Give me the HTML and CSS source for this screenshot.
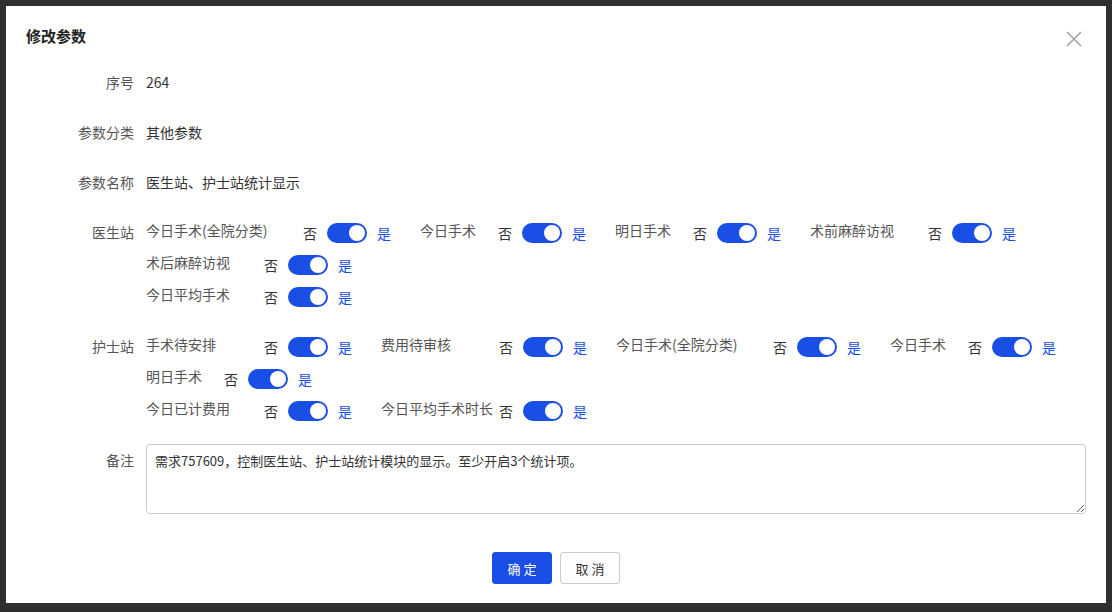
FILE: index.html
```html
<!DOCTYPE html>
<html lang="zh-CN">

<head>
    <meta charset="UTF-8">
    <meta name="viewport" content="width=device-width, initial-scale=1.0">
    <title>修改参数</title>
    <link rel="stylesheet" href="styles.css">
</head>

<body>
    <div class="dialog">
        <div class="dialog-header">
            <span class="dialog-title">修改参数</span>
            <span class="close-btn">
                <svg width="16" height="16" viewBox="0 0 16 16">
                    <path d="M1 1 L15 15 M15 1 L1 15" stroke="#9a9a9a" stroke-width="1.4" fill="none" />
                </svg>
            </span>
        </div>

        <div class="dialog-body">
            <div class="form-row">
                <label class="form-label">序号</label>
                <div class="form-value">264</div>
            </div>
            <div class="form-row">
                <label class="form-label">参数分类</label>
                <div class="form-value">其他参数</div>
            </div>
            <div class="form-row">
                <label class="form-label">参数名称</label>
                <div class="form-value">医生站、护士站统计显示</div>
            </div>

            <!-- 医生站 -->
            <div class="form-row">
                <label class="form-label">医生站</label>
                <div class="form-value">
                    <div class="switch-line">
                        <div class="switch-item"><span class="item-label w-l">今日手术(全院分类)</span><span class="off">否</span><span class="switch"></span><span class="on">是</span></div>
                        <div class="switch-item"><span class="item-label w-s">今日手术</span><span class="off">否</span><span class="switch"></span><span class="on">是</span></div>
                        <div class="switch-item"><span class="item-label w-s">明日手术</span><span class="off">否</span><span class="switch"></span><span class="on">是</span></div>
                        <div class="switch-item"><span class="item-label w-m">术前麻醉访视</span><span class="off">否</span><span class="switch"></span><span class="on">是</span></div>
                    </div>
                    <div class="switch-line">
                        <div class="switch-item"><span class="item-label w-m">术后麻醉访视</span><span class="off">否</span><span class="switch"></span><span class="on">是</span></div>
                    </div>
                    <div class="switch-line">
                        <div class="switch-item"><span class="item-label w-m">今日平均手术</span><span class="off">否</span><span class="switch"></span><span class="on">是</span></div>
                    </div>
                </div>
            </div>

            <!-- 护士站 -->
            <div class="form-row">
                <label class="form-label">护士站</label>
                <div class="form-value">
                    <div class="switch-line">
                        <div class="switch-item"><span class="item-label w-m">手术待安排</span><span class="off">否</span><span class="switch"></span><span class="on">是</span></div>
                        <div class="switch-item"><span class="item-label w-m">费用待审核</span><span class="off">否</span><span class="switch"></span><span class="on">是</span></div>
                        <div class="switch-item"><span class="item-label w-l">今日手术(全院分类)</span><span class="off">否</span><span class="switch"></span><span class="on">是</span></div>
                        <div class="switch-item"><span class="item-label w-s">今日手术</span><span class="off">否</span><span class="switch"></span><span class="on">是</span></div>
                    </div>
                    <div class="switch-line">
                        <div class="switch-item"><span class="item-label w-s">明日手术</span><span class="off">否</span><span class="switch"></span><span class="on">是</span></div>
                    </div>
                    <div class="switch-line">
                        <div class="switch-item"><span class="item-label w-m">今日已计费用</span><span class="off">否</span><span class="switch"></span><span class="on">是</span></div>
                        <div class="switch-item"><span class="item-label w-m">今日平均手术时长</span><span class="off">否</span><span class="switch"></span><span class="on">是</span></div>
                    </div>
                </div>
            </div>

            <div class="form-row">
                <label class="form-label">备注</label>
                <div class="form-value">
                    <textarea class="remark">需求757609，控制医生站、护士站统计模块的显示。至少开启3个统计项。</textarea>
                </div>
            </div>
        </div>

        <div class="dialog-footer">
            <button class="btn btn-primary">确 定</button>
            <button class="btn btn-default">取 消</button>
        </div>
    </div>
</body>

</html>
```

FILE: styles.css
```css
body {
    margin: 0;
    padding: 6px;
    background-color: #2f2f2f;
    font-family: "Noto Sans CJK SC", "Liberation Sans", sans-serif;
    font-size: 14px;
    color: #333;
}

.dialog {
    width: 1100px;
    height: 597px;
    background-color: #fff;
    display: flex;
    flex-direction: column;
}

.dialog-header {
    height: 60px;
    box-sizing: border-box;
    padding: 20px 24px 0 20px;
    display: flex;
    justify-content: space-between;
    align-items: flex-start;
}

.dialog-title {
    font-size: 15px;
    font-weight: bold;
    line-height: 20px;
    color: #222;
}

.close-btn {
    display: block;
    width: 16px;
    height: 16px;
    margin-top: 5px;
    cursor: pointer;
}

.dialog-body {
    padding: 0 20px;
}

.form-row {
    display: flex;
    margin-bottom: 18px;
}

.form-label {
    width: 120px;
    flex-shrink: 0;
    box-sizing: border-box;
    padding-right: 12px;
    text-align: right;
    line-height: 32px;
    color: #555;
}

.form-value {
    flex: 1;
    line-height: 32px;
    color: #333;
}

.switch-line {
    display: flex;
    flex-wrap: wrap;
    column-gap: 29px;
}

.switch-item {
    display: flex;
    align-items: center;
    height: 32px;
}

.item-label {
    color: #555;
    line-height: 20px;
    margin-bottom: 4px;
}

.w-s {
    width: 78px;
}

.w-m {
    width: 118px;
}

.w-l {
    width: 157px;
}

.off {
    color: #333;
    line-height: 20px;
    margin-right: 10px;
    margin-top: 2px;
}

.on {
    color: #1a4fe6;
    line-height: 20px;
    margin-left: 10px;
    margin-top: 2px;
}

.switch {
    width: 40px;
    height: 20px;
    border-radius: 10px;
    background-color: #1a4fe6;
    box-sizing: border-box;
    padding: 2px;
    display: flex;
    justify-content: flex-end;
    margin-top: 2px;
}

.switch::after {
    content: "";
    width: 16px;
    height: 16px;
    border-radius: 50%;
    background-color: #fff;
}

.remark {
    display: block;
    width: 100%;
    height: 70px;
    box-sizing: border-box;
    padding: 6px 8px;
    border: 1px solid #c8cad0;
    border-radius: 4px;
    font-family: "Noto Sans CJK SC", "Liberation Sans", sans-serif;
    font-size: 13px;
    line-height: 20px;
    color: #333;
    resize: vertical;
}

.dialog-footer {
    display: flex;
    justify-content: center;
    gap: 8px;
    padding-top: 20px;
}

.btn {
    width: 60px;
    height: 32px;
    border-radius: 3px;
    font-family: "Noto Sans CJK SC", "Liberation Sans", sans-serif;
    font-size: 13px;
    cursor: pointer;
}

.btn-primary {
    background-color: #1a4fe6;
    border: 1px solid #1a4fe6;
    color: #fff;
}

.btn-default {
    background-color: #fff;
    border: 1px solid #c8cad0;
    color: #333;
}
```
